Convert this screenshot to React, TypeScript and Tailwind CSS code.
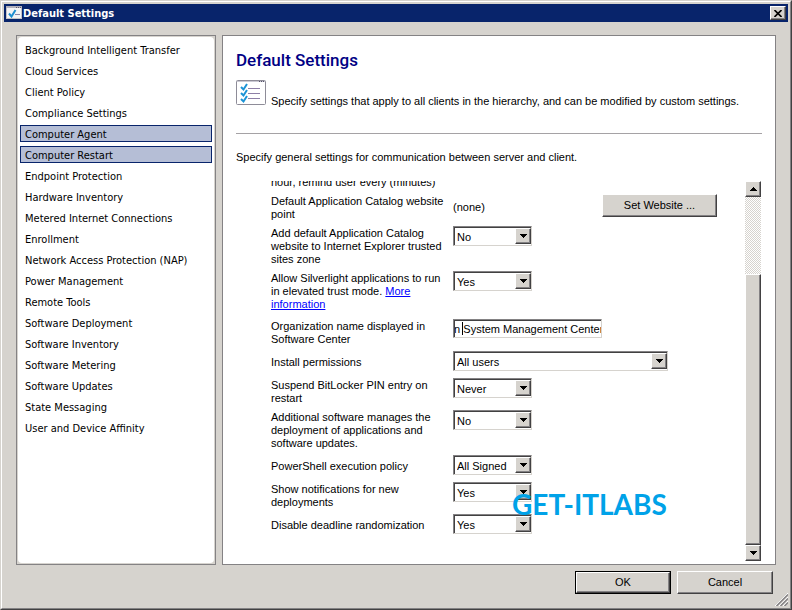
import { ReactNode, useState } from "react";
import clsx from "clsx";

const sections = [
    "Background Intelligent Transfer",
    "Cloud Services",
    "Client Policy",
    "Compliance Settings",
    "Computer Agent",
    "Computer Restart",
    "Endpoint Protection",
    "Hardware Inventory",
    "Metered Internet Connections",
    "Enrollment",
    "Network Access Protection (NAP)",
    "Power Management",
    "Remote Tools",
    "Software Deployment",
    "Software Inventory",
    "Software Metering",
    "Software Updates",
    "State Messaging",
    "User and Device Affinity",
];

const raised = "bg-[#d6d3ce] border border-t-white border-l-white border-r-[#424142] border-b-[#424142] shadow-[inset_-1px_-1px_0_#848284]";
const sunken = "bg-white border border-t-[#848284] border-l-[#848284] border-r-[#d6d3ce] border-b-[#d6d3ce] shadow-[inset_1px_1px_0_#424142]";

const TitleIcon = () => (
    <svg width="16" height="14" viewBox="0 0 16 14" aria-hidden="true">
        <rect x="0.5" y="0.5" width="15" height="12" fill="#f4f4f6" stroke="#c4c2c6" />
        <path d="M0 1h16" stroke="#b4b2bc" strokeWidth="2" />
        <path d="M10 1.5h1M12 1.5h1M14 1.5h1" stroke="#5a5a70" />
        <path d="M3 7.5l2.5 3L9.5 4" fill="none" stroke="#1f8fd0" strokeWidth="2" />
        <path d="M9 8.5h5" stroke="#8a84a8" />
    </svg>
);

const ListIcon = () => (
    <svg className="shrink-0" width="30" height="25" viewBox="0 0 30 25" aria-hidden="true">
        <rect x="0.5" y="0.5" width="29" height="24" rx="1" fill="#fff" stroke="#8e8c98" />
        <path d="M1 1.5h28" stroke="#c9c8d2" />
        <path d="M23 1.5h1M25 1.5h1M27 1.5h1" stroke="#55536a" />
        <g fill="none" stroke="#1c93d6" strokeWidth="2">
            <path d="M5 7l2.5 2.5L11 4" />
            <path d="M5 13l2.5 2.5L11 10" />
            <path d="M5 19l2.5 2.5L11 16" />
        </g>
        <path d="M12 8.5h12M12 13.5h12M12 18.5h12" stroke="#8d7fa6" />
    </svg>
);

const Arrow = ({ up }: { up?: boolean }) => (
    <svg width="7" height="4" viewBox="0 0 7 4" shapeRendering="crispEdges" aria-hidden="true">
        <path d={up ? "M0 4h7L3.5 0z" : "M0 0h7L3.5 4z"} fill="#000" />
    </svg>
);

const Row = ({ id, label, tall, children }: { id: string; label: ReactNode; tall?: boolean; children?: ReactNode }) => (
    <div className={clsx("flex shrink-0 items-start pb-[5px]", tall ? "min-h-12" : "min-h-[27px]")}>
        <div className="w-[182px] shrink-0 pt-px">
            <label htmlFor={id} className="flex min-h-5 w-[178px] flex-col justify-center">
                <span>{label}</span>
            </label>
        </div>
        {children}
    </div>
);

const Select = ({ id, value, wide }: { id: string; value: string; wide?: boolean }) => (
    <div className={clsx("relative h-5 shrink-0", wide ? "w-[215px]" : "w-[79px]")}>
        <select id={id} defaultValue={value} className={clsx("block h-5 w-full appearance-none pt-px pl-[3px] leading-4 outline-none", sunken)}>
            <option>{value}</option>
        </select>
        <span className={clsx("pointer-events-none absolute top-[2px] right-px flex h-4 w-4 items-center justify-center", raised)}>
            <Arrow />
        </span>
    </div>
);

const App = () => {
    const [selected] = useState(["Computer Agent", "Computer Restart"]);

    return (
        <div className="h-screen border border-t-[#d6d3ce] border-l-[#d6d3ce] border-r-[#424142] border-b-[#424142] font-['Liberation_Sans',sans-serif] text-[11px] leading-[13px] text-black">
            <div className="relative flex h-full flex-col border border-t-white border-l-white border-r-[#848284] border-b-[#848284] bg-[#d6d3ce] p-[2px]">
                <header className="flex h-[18px] shrink-0 items-center bg-[#08246b] px-[2px]">
                    <TitleIcon />
                    <h1 className="ml-px flex-1 font-['DejaVu_Sans_Condensed','DejaVu_Sans',sans-serif] text-[11px] font-bold text-white">Default Settings</h1>
                    <button aria-label="Close" className={clsx("flex h-[14px] w-4 items-center justify-center", raised)}>
                        <svg width="8" height="7" viewBox="0 0 8 7" aria-hidden="true">
                            <path d="M0.5 0l7 7M7.5 0l-7 7" stroke="#000" strokeWidth="1.6" />
                        </svg>
                    </button>
                </header>

                <main className="flex min-h-0 flex-1 gap-1.5 px-3 pt-[13px]">
                    <nav className="w-[200px] shrink-0 border border-[#848284] bg-[#d6d3ce] p-px font-['DejaVu_Sans_Condensed','DejaVu_Sans',sans-serif] text-[11px]">
                        <ul className="flex h-full flex-col gap-1 rounded-sm bg-white px-[2px] py-1">
                            {sections.map((name) => (
                                <li key={name}>
                                    <a
                                        href="#"
                                        className={clsx(
                                            "block h-[17px] border px-1 pt-px leading-4",
                                            selected.includes(name) ? "border-[#08246b] bg-[#b5bed6]" : "border-transparent"
                                        )}
                                    >
                                        {name}
                                    </a>
                                </li>
                            ))}
                        </ul>
                    </nav>

                    <section className="flex min-w-0 flex-1 flex-col border border-[#848284] bg-white px-[13px] pb-[3px]">
                        <h2 className="mt-3 font-[Roboto,sans-serif] text-[17px] leading-6 font-medium text-[#000084]">Default Settings</h2>
                        <div className="mt-2 flex items-start gap-[5px]">
                            <ListIcon />
                            <p className="mt-[15px]">Specify settings that apply to all clients in the hierarchy, and can be modified by custom settings.</p>
                        </div>
                        <hr className="mt-[25px] border-[#a5a2a5]" />
                        <p className="mt-[17px]">Specify general settings for communication between server and client.</p>

                        <div className="mt-[17px] flex min-h-0 flex-1 pr-px">
                            <div className="flex min-w-0 flex-1 flex-col justify-end overflow-hidden pb-5 pl-[35px]">
                                <p className="shrink-0 pb-[5px]">hour, remind user every (minutes)</p>
                                <Row id="catalog" label="Default Application Catalog website point">
                                    <output id="catalog" className="w-[149px] pt-[7px]">(none)</output>
                                    <button className={clsx("h-[23px] w-[115px]", raised)}>Set Website ...</button>
                                </Row>
                                <Row id="trusted" label="Add default Application Catalog website to Internet Explorer trusted sites zone">
                                    <Select id="trusted" value="No" />
                                </Row>
                                <Row
                                    id="silverlight"
                                    tall
                                    label={<>Allow Silverlight applications to run in elevated trust mode. <a href="#" className="text-[#0000ff] underline">More information</a></>}
                                >
                                    <Select id="silverlight" value="Yes" />
                                </Row>
                                <Row id="organization" label="Organization name displayed in Software Center">
                                    <div className="relative">
                                        <input id="organization" defaultValue="on System Management Center" className={clsx("block h-[19px] w-[149px] pl-px -indent-[7px] outline-none", sunken)} />
                                        <span className="absolute top-[3px] left-[9px] h-[13px] w-px bg-black" />
                                    </div>
                                </Row>
                                <Row id="install" label="Install permissions">
                                    <Select id="install" value="All users" wide />
                                </Row>
                                <Row id="bitlocker" label="Suspend BitLocker PIN entry on restart">
                                    <Select id="bitlocker" value="Never" />
                                </Row>
                                <Row id="additional" label="Additional software manages the deployment of applications and software updates.">
                                    <Select id="additional" value="No" />
                                </Row>
                                <Row id="powershell" label="PowerShell execution policy">
                                    <Select id="powershell" value="All Signed" />
                                </Row>
                                <Row id="notifications" label="Show notifications for new deployments">
                                    <Select id="notifications" value="Yes" />
                                </Row>
                                <div className="relative shrink-0">
                                    <Row id="deadline" label="Disable deadline randomization">
                                        <Select id="deadline" value="Yes" />
                                    </Row>
                                    <span className="pointer-events-none absolute -top-6 left-[241px] font-[Lato,sans-serif] text-[28px] leading-7 font-bold text-[#00a2e8]">GET-ITLABS</span>
                                </div>
                            </div>

                            <div className="flex w-4 shrink-0 flex-col bg-[conic-gradient(#fff_25%,#d6d3ce_0_50%,#fff_0_75%,#d6d3ce_0)] bg-[length:2px_2px]">
                                <button aria-label="Scroll up" className={clsx("flex h-4 shrink-0 items-center justify-center", raised)}>
                                    <Arrow up />
                                </button>
                                <div className="grow-[77]" />
                                <div className={clsx("grow-[271]", raised)} />
                                <button aria-label="Scroll down" className={clsx("flex h-4 shrink-0 items-center justify-center", raised)}>
                                    <Arrow />
                                </button>
                            </div>
                        </div>
                    </section>
                </main>

                <footer className="flex shrink-0 justify-end gap-1.5 pt-1.5 pr-[15px] pb-3">
                    <div className="border border-black">
                        <button className={clsx("block h-[21px] w-[94px]", raised)}>OK</button>
                    </div>
                    <button className={clsx("h-[23px] w-24", raised)}>Cancel</button>
                </footer>

                <svg className="absolute right-0.5 bottom-0.5" width="13" height="13" viewBox="0 0 13 13" aria-hidden="true">
                    <path d="M0 13L13 0M4 13l9-9M8 13l5-5" stroke="#fff" />
                    <path d="M1.5 13L13 1.5M5.5 13L13 5.5M9.5 13L13 9.5" stroke="#848284" strokeWidth="1.5" />
                </svg>
            </div>
        </div>
    );
};

export default App;
